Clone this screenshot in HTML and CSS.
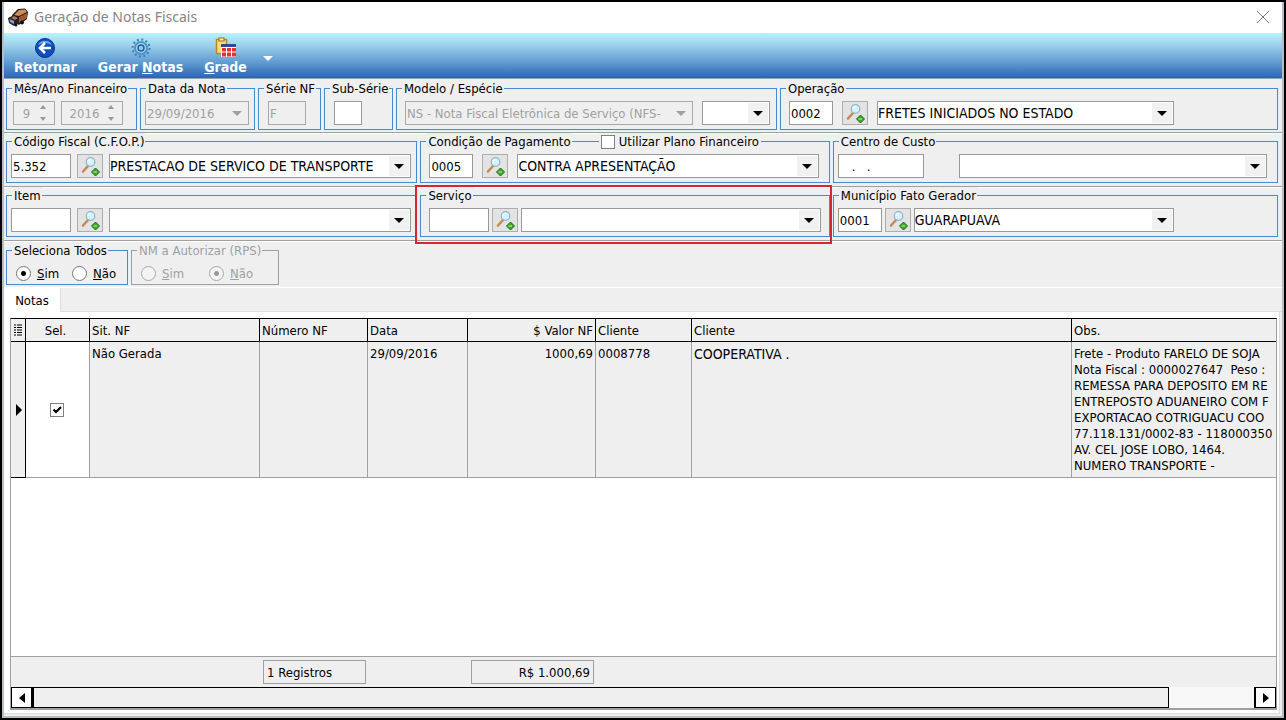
FILE: index.html
```html
<!DOCTYPE html>
<html lang="pt-BR">
<head>
<meta charset="utf-8">
<title>Geração de Notas Fiscais</title>
<link rel="stylesheet" href="styles.css">
</head>
<body>
<svg class="defs" aria-hidden="true">
  <symbol id="lookup" viewBox="0 0 20 20">
    <path d="M3 15.500 8 10" stroke="#c68a56" stroke-width="2.600" stroke-linecap="round"/>
    <circle cx="10.500" cy="6" r="4.300" fill="#d5f2fb" stroke="#8fb4cc" stroke-width="1.200"/>
    <path d="M8 5.500a3 3 0 0 1 3-2.200" stroke="#fff" stroke-width="1.200" fill="none"/>
    <path d="M15.500 12 19.500 16 15.500 20 11.500 16Z" fill="#3fa52f" stroke="#1d6a16"/>
    <path d="M13.500 16h3.500" stroke="#8be66a" stroke-width="1.500"/>
  </symbol>
  <symbol id="spin" viewBox="0 0 8 18">
    <path d="M1 5 4 1 7 5ZM1 13 4 17 7 13Z" fill="#999"/>
  </symbol>
</svg>
<div class="window">
  <header class="titlebar">
    <svg class="app-icon" viewBox="0 0 20 20" aria-hidden="true">
      <path d="M4 8 10 2 17 1.500 20 5 19 12 11 18 7 15Z" fill="#2c150d"/>
      <path d="M6 8 11 3 17 2.500 19 5 11 9Z" fill="#c98d5e"/>
      <path d="M11 10 19 6V11L11 16Z" fill="#9a5a36"/>
      <path d="M0 11 6 8 11 11V16L6 19 1 16Z" fill="#20222e"/>
      <path d="M1.500 12 6 14V17L2 15Z" fill="#7fa6cf"/>
      <path d="M6 9 10 11 7 13 3 11Z" fill="#b0754a"/>
      <circle cx="14" cy="15.500" r="2" fill="#111"/><circle cx="8" cy="18" r="1.500" fill="#111"/>
    </svg>
    <h1>Geração de Notas Fiscais</h1>
    <button class="close" aria-label="Fechar"><svg viewBox="0 0 12 12"><path d="M0 0 12 12M12 0 0 12" stroke="#777"/></svg></button>
  </header>

  <nav class="toolbar">
    <button class="tool">
      <svg viewBox="0 0 22 22"><circle cx="11" cy="11" r="9.500" fill="#0d4fc0" stroke="#083082"/><path d="M4 8a8 8 0 0 1 14 0Q11 4 4 8Z" fill="#6ca7f2"/><path d="M17 11H6M11 6 6 11l5 5" stroke="#fff" stroke-width="2.600" fill="none"/></svg>
      <span>Retornar</span>
    </button>
    <button class="tool">
      <svg viewBox="0 0 22 22"><circle cx="11" cy="11" r="8.500" fill="none" stroke="#3c7fb5" stroke-width="2" stroke-dasharray="2 2.450"/><circle cx="11" cy="11" r="6" fill="#a8dcf8" stroke="#4b93c9" stroke-width="2"/><circle cx="11" cy="11" r="3" fill="#8ccbee" stroke="#21598f" stroke-width="1.400"/></svg>
      <span>Gerar <u>N</u>otas</span>
    </button>
    <button class="tool">
      <svg viewBox="0 0 22 22"><rect x="1.500" y="2.500" width="10" height="14" fill="#f6dc7a" stroke="#b98716" stroke-width="1.400"/><rect x="4" y="1" width="5" height="3" fill="#fbefb0" stroke="#a66b10"/><path d="M6 7h15v13H6z" fill="#fff"/><path d="M6 7h15v3H6z" fill="#2a4d9b"/><path d="M7 11h4v3.500H7zM12 11h4v3.500h-4zM17 11h4v3.500h-4zM7 15.500h4v4H7zM12 15.500h4v4h-4zM17 15.500h4v4h-4z" fill="#e2342c"/></svg>
      <span><u>G</u>rade</span>
    </button>
    <button class="more" aria-label="Mais opções"><svg viewBox="0 0 10 5"><path d="M0 0H10L5 5Z" fill="#fff"/></svg></button>
  </nav>

  <form class="filters">
    <div class="row">
      <fieldset class="group w-month">
        <legend>Mês/Ano Financeiro</legend>
        <div class="fields gap-s">
          <span class="spin f42"><input aria-label="Mês" value="9" disabled><svg><use href="#spin"/></svg></span>
          <span class="spin f62"><input aria-label="Ano" value="2016" disabled><svg><use href="#spin"/></svg></span>
        </div>
      </fieldset>
      <fieldset class="group w-date">
        <legend>Data da Nota</legend>
        <div class="fields flush"><select class="grow" aria-label="Data da Nota" disabled><option>29/09/2016</option></select></div>
      </fieldset>
      <fieldset class="group w-serie">
        <legend>Série NF</legend>
        <div class="fields inset"><input class="f38" aria-label="Série NF" value="F" disabled></div>
      </fieldset>
      <fieldset class="group w-sub">
        <legend>Sub-Série</legend>
        <div class="fields inset"><input class="f28" aria-label="Sub-Série"></div>
      </fieldset>
      <fieldset class="group g-model">
        <legend>Modelo / Espécie</legend>
        <div class="fields gap-m">
          <select class="grow" aria-label="Modelo" disabled><option>NS - Nota Fiscal Eletrônica de Serviço (NFS-</option></select>
          <select class="f68" aria-label="Espécie"><option></option></select>
        </div>
      </fieldset>
      <fieldset class="group g-oper">
        <legend>Operação</legend>
        <div class="fields gap-m wide-end">
          <input class="f44" aria-label="Código da operação" value="0002">
          <button type="button" class="lookup" aria-label="Pesquisar operação"><svg><use href="#lookup"/></svg></button>
          <select class="grow caps" aria-label="Operação"><option>FRETES INICIADOS NO ESTADO</option></select>
        </div>
      </fieldset>
    </div>

    <div class="row">
      <fieldset class="group g-third">
        <legend>Código Fiscal (C.F.O.P.)</legend>
        <div class="fields gap-s flush">
          <input class="f60" aria-label="Código fiscal" value="5.352">
          <button type="button" class="lookup" aria-label="Pesquisar código fiscal"><svg><use href="#lookup"/></svg></button>
          <select class="grow caps" aria-label="Código Fiscal"><option>PRESTACAO DE SERVICO DE TRANSPORTE</option></select>
        </div>
      </fieldset>
      <div class="holder g-third">
        <fieldset class="group">
          <legend>Condição de Pagamento</legend>
          <div class="fields gap-m mid-end">
            <input class="f44" aria-label="Código da condição" value="0005">
            <button type="button" class="lookup" aria-label="Pesquisar condição"><svg><use href="#lookup"/></svg></button>
            <select class="grow caps" aria-label="Condição de Pagamento"><option>CONTRA APRESENTAÇÃO</option></select>
          </div>
        </fieldset>
        <label class="on-border"><input type="checkbox">Utilizar Plano Financeiro</label>
      </div>
      <fieldset class="group g-last">
        <legend>Centro de Custo</legend>
        <div class="fields gap-l flush mid-end">
          <input class="f86 mask" aria-label="Código do centro de custo" value=".   .">
          <select class="grow" aria-label="Centro de Custo"><option></option></select>
        </div>
      </fieldset>
    </div>

    <div class="row">
      <fieldset class="group g-third">
        <legend>Item</legend>
        <div class="fields gap-s flush">
          <input class="f60" aria-label="Código do item">
          <button type="button" class="lookup" aria-label="Pesquisar item"><svg><use href="#lookup"/></svg></button>
          <select class="grow" aria-label="Item"><option></option></select>
        </div>
      </fieldset>
      <div class="holder marked g-third">
        <fieldset class="group">
          <legend>Serviço</legend>
          <div class="fields gap-xs">
            <input class="f60" aria-label="Código do serviço">
            <button type="button" class="lookup" aria-label="Pesquisar serviço"><svg><use href="#lookup"/></svg></button>
            <select class="grow" aria-label="Serviço"><option></option></select>
          </div>
        </fieldset>
      </div>
      <fieldset class="group g-last">
        <legend>Município Fato Gerador</legend>
        <div class="fields gap-xs flush wide-end">
          <input class="f44" aria-label="Código do município" value="0001">
          <button type="button" class="lookup" aria-label="Pesquisar município"><svg><use href="#lookup"/></svg></button>
          <select class="grow caps" aria-label="Município Fato Gerador"><option>GUARAPUAVA</option></select>
        </div>
      </fieldset>
    </div>

    <div class="row radios">
      <fieldset class="group w-todos">
        <legend>Seleciona Todos</legend>
        <div class="choices">
          <label><input type="radio" name="todos" checked><u>S</u>im</label>
          <label><input type="radio" name="todos"><u>N</u>ão</label>
        </div>
      </fieldset>
      <fieldset class="group off w-rps" disabled>
        <legend>NM a Autorizar (RPS)</legend>
        <div class="choices apart">
          <label><input type="radio" name="rps"><u>S</u>im</label>
          <label><input type="radio" name="rps" checked><u>N</u>ão</label>
        </div>
      </fieldset>
    </div>
  </form>

  <div class="tabs"><button class="tab">Notas</button></div>

  <main class="page">
    <div class="grid">
      <div class="grid-body">
        <table>
          <colgroup><col class="c-ind"><col class="c-sel"><col class="c-sit"><col class="c-num"><col class="c-data"><col class="c-valor"><col class="c-cod"><col class="c-cli"><col></colgroup>
          <thead>
            <tr>
              <th><svg class="menu" viewBox="0 0 8 12" aria-hidden="true"><path d="M0 1h2M3 1h5M0 3.500h2M3 3.500h5M0 6h2M3 6h5M0 8.500h2M3 8.500h5M0 11h2M3 11h5" stroke="#000"/></svg></th>
              <th class="sel-head">Sel.</th><th>Sit. NF</th><th>Número NF</th><th>Data</th><th class="right">$ Valor NF</th><th>Cliente</th><th>Cliente</th><th>Obs.</th>
            </tr>
          </thead>
          <tbody>
            <tr>
              <td class="ind"><svg class="pointer" viewBox="0 0 6 12" aria-hidden="true"><path d="M0 0 6 6 0 12Z"/></svg></td>
              <td class="sel"><input type="checkbox" aria-label="Selecionar nota" checked></td>
              <td>Não Gerada</td><td></td><td>29/09/2016</td><td class="right">1000,69</td><td>0008778</td><td class="caps">COOPERATIVA .</td>
              <td class="obs">Frete - Produto FARELO DE SOJA
Nota Fiscal : 0000027647  Peso :
REMESSA PARA DEPOSITO EM RE
ENTREPOSTO ADUANEIRO COM F
EXPORTACAO COTRIGUACU COO
77.118.131/0002-83 - 118000350
AV. CEL JOSE LOBO, 1464.
NUMERO TRANSPORTE -</td>
            </tr>
          </tbody>
        </table>
      </div>
      <div class="totals">
        <output class="count">1 Registros</output>
        <output class="sum">R$ 1.000,69</output>
      </div>
      <div class="scroll">
        <button aria-label="Rolar para a esquerda"><svg viewBox="0 0 6 10"><path d="M6 0V10L0 5Z"/></svg></button>
        <div class="track"><div class="thumb"></div></div>
        <button aria-label="Rolar para a direita"><svg viewBox="0 0 6 10"><path d="M0 0V10L6 5Z"/></svg></button>
      </div>
    </div>
  </main>
</div>
</body>
</html>
```
FILE: styles.css
```css
* { box-sizing: border-box; }

body {
  margin: 0;
  background: #000;
  color: #000;
  font: 13px/17px "DejaVu Sans Condensed", "DejaVu Sans", sans-serif;
}

button, input, select { margin: 0; font: inherit; color: inherit; border-radius: 0; }
button { padding: 0; border: 0; background: none; }
svg { display: block; fill: none; }
.defs { position: absolute; width: 0; height: 0; }
.caps { font-size: 14px; }

.window {
  display: flex;
  flex-direction: column;
  min-height: calc(100vh - 4px);
  margin: 2px;
  border: 2px solid #b9bcc2;
  border-top: 0;
  background: #efefef;
}

/* Title bar */
.titlebar { display: flex; align-items: center; height: 31px; padding: 0 13px 2px 4px; background: #fff; }
.app-icon { width: 20px; height: 20px; }
.titlebar h1 {
  flex: 1;
  margin: 0 0 0 6px;
  color: #858585;
  font: 14px/20px "Noto Sans", "Open Sans", sans-serif;
}
.close svg { width: 12px; height: 12px; }

/* Toolbar */
.toolbar {
  display: flex;
  gap: 21px;
  height: 46px;
  padding: 4px 10px 0;
  border-bottom: 1px solid #94a3b5;
  background: linear-gradient(#b6f3fc, #a0d4ee 25%, #5c97d0 68%, #2c65b0);
}
.tool { display: flex; flex-direction: column; align-items: center; color: #fff; font-weight: bold; font-size: 14px; }
.tool svg { width: 22px; height: 22px; }
.tool span { line-height: 16px; }
.more { align-self: flex-start; margin: 19px 0 0 -5px; }
.more svg { width: 10px; height: 5px; }

/* Filter rows */
.row { display: flex; gap: 3px; height: 54px; padding: 0 4px 0 2px; border-bottom: 1px solid #a0a0a0; box-shadow: 0 1px #fff; }
.row:first-child { padding-top: 1px; }
.row.radios { height: 46px; padding-top: 1px; border: 0; box-shadow: none; }
.group {
  flex: none;
  min-width: 0;
  height: 50px;
  margin: 0;
  padding: 0;
  border: 1px solid #4a88cf;
  box-shadow: 0 0 0 1px #dcf4fe;
}
.group legend { margin-left: 5px; padding: 0 1px 0 2px; background: #efefef; white-space: nowrap; }
.radios .group { height: 43px; }
.group.off { border-color: #a0a0a0; box-shadow: none; color: #a0a0a0; }
.holder { position: relative; }
.holder .group { width: 100%; }

.w-month { width: 131px; }
.w-date { width: 115px; }
.w-serie { width: 63px; }
.w-sub { width: 69px; }
.w-todos { width: 122px; }
.w-rps { width: 148px; }
.g-model { flex: 382 1 0; }
.g-oper { flex: 500 1 0; }
.g-third { flex: 412 1 0; }
.g-last { flex: 446 1 0; }

.fields { display: flex; padding: 4px 8px 0 8px; }
.w-month .fields { padding-left: 6px; }
.g-model .fields { padding-right: 6px; }
.fields.flush { padding-left: 4px; padding-right: 5px; }
.fields.inset { padding-left: 9px; }
.fields.mid-end { padding-right: 10px; }
.fields.wide-end { padding-right: 103px; }
.gap-xs { gap: 3px; }
.gap-s { gap: 6px; }
.gap-m { gap: 9px; }
.gap-l { gap: 35px; }

.fields input, .fields select {
  height: 24px;
  padding: 0 1px;
  border: 1px solid #9c9894;
  outline: 0;
  background-color: #fff;
}
.fields select {
  appearance: none;
  min-width: 0;
  padding-left: 1px;
  padding-right: 22px;
  background-image: url("data:image/svg+xml,%3Csvg xmlns='http://www.w3.org/2000/svg' width='20' height='20'%3E%3Crect width='20' height='20' fill='%23f1f1f1'/%3E%3Cpath d='M5 8h10l-5 5z'/%3E%3C/svg%3E");
  background-position: right 1px center;
  background-repeat: no-repeat;
}
.fields select.caps { padding-left: 0; }
.fields input:disabled, .fields select:disabled {
  border-color: #a8a8a8;
  background-color: #efefef;
  color: #a0a0a0;
  opacity: 1;
}
.fields select:disabled {
  background-image: url("data:image/svg+xml,%3Csvg xmlns='http://www.w3.org/2000/svg' width='20' height='20'%3E%3Cpath d='M5 8h10l-5 5z' fill='%23a0a0a0'/%3E%3C/svg%3E");
}
.grow { flex: 1; }
.f28 { width: 28px; }
.f38 { width: 38px; }
.f42 { width: 42px; }
.f44 { width: 44px; flex: none; }
.f60 { width: 60px; flex: none; }
.f62 { width: 62px; }
.f68 { width: 68px; flex: none; }
.f86 { width: 86px; flex: none; }
.fields .mask { padding-left: 13px; white-space: pre; }

.spin { display: flex; align-items: center; border: 1px solid #a8a8a8; height: 24px; padding-right: 7px; }
.fields .spin input { flex: 1; width: 0; min-width: 0; height: 22px; border: 0; text-align: center; }
.spin svg { width: 8px; height: 18px; }

.lookup { display: grid; place-items: center; flex: none; width: 26px; height: 24px; border: 1px solid #adadad; background: #e3e3e3; }
.lookup svg { width: 20px; height: 20px; }

.on-border {
  position: absolute;
  top: 0;
  right: 69px;
  display: flex;
  align-items: center;
  gap: 4px;
  padding: 0 2px;
  background: #efefef;
  white-space: nowrap;
}

input[type="checkbox"] { appearance: none; width: 14px; height: 14px; border: 1px solid #808080; background: #fff center no-repeat; }
input[type="checkbox"]:checked {
  background-image: url("data:image/svg+xml,%3Csvg xmlns='http://www.w3.org/2000/svg' width='10' height='10'%3E%3Cpath d='M1.500 4.500 4 7l5-5' fill='none' stroke='%23000' stroke-width='2.200'/%3E%3C/svg%3E");
}

/* Red frame around the highlighted group */
.marked::after {
  content: "";
  position: absolute;
  inset: -2px -2px -4px -5px;
  border: 2px solid #d8262f;
  pointer-events: none;
}

.choices { display: flex; gap: 13px; padding: 6px 0 0 9px; }
.choices.apart { gap: 25px; }
.choices label { display: flex; align-items: center; }
input[type="radio"] { appearance: none; width: 15px; height: 15px; margin-right: 6px; border: 1px solid #777; border-radius: 50%; background: #fff; }
input[type="radio"]:checked { background: radial-gradient(circle, #000 2px, #fff 3px); }
input[type="radio"]:disabled { border-color: #a8a8a8; background: #f4f4f4; }
input[type="radio"]:disabled:checked { background: radial-gradient(circle, #999 2px, #f4f4f4 3px); }

/* Tabs and grid */
.tabs { height: 25px; border-top: 1px solid #fff; border-bottom: 1px solid #dcdcdc; }
.tab { width: 57px; height: 24px; border-right: 1px solid #dcdcdc; background: #fff; }
.page { display: flex; flex: 1; margin: 0 2px 2px 0; padding: 6px 2px 3px 6px; border-right: 1px solid #dcdcdc; border-bottom: 1px solid #dcdcdc; background: #fff; }
.grid { display: flex; flex: 1; flex-direction: column; min-width: 0; border: 1px solid #a0a0a0; border-top-color: #000; border-bottom-width: 2px; }
.grid-body { flex: 1; overflow: hidden; }

table { width: 100%; table-layout: fixed; border-collapse: separate; border-spacing: 0; }
th, td { overflow: hidden; padding: 0 2px; border-right: 1px solid #a0a0a0; border-bottom: 1px solid #a0a0a0; background: #efefef; text-align: left; white-space: nowrap; }
th { height: 23px; border-color: #000; font-weight: normal; }
td { height: 136px; padding-top: 4px; line-height: 16px; vertical-align: top; }
th:last-child, td:last-child { border-right: 0; padding-right: 0; }
.c-ind { width: 15px; }
.c-sel { width: 64px; }
.c-sit { width: 170px; }
.c-num { width: 108px; }
.c-data { width: 100px; }
.c-valor { width: 128px; }
.c-cod { width: 96px; }
.c-cli { width: 380px; }
.right { text-align: right; }
.sel-head { padding-right: 6px; text-align: center; }
td.ind, td.sel { padding: 0; vertical-align: middle; }
td.ind { border-color: #000; }
td.sel { padding-right: 2px; background: #fff; }
td.sel input { display: block; margin: 0 auto; }
.menu { width: 8px; height: 12px; margin-left: 1px; }
.pointer { width: 6px; height: 12px; margin-left: 5px; fill: #000; }
.obs { white-space: pre; }

.totals { display: flex; gap: 105px; height: 31px; padding: 3px 0 0 252px; border-top: 1px solid #a0a0a0; background: #efefef; }
.totals output { height: 24px; padding: 0 3px; border: 1px solid #a0a0a0; line-height: 23px; }
.count { width: 103px; }
.sum { width: 123px; text-align: right; }

.scroll { display: flex; height: 21px; }
.scroll button { display: grid; place-items: center; width: 22px; border: 1px solid #000; background: #fff; }
.scroll button:first-child { border-right-width: 2px; }
.scroll button:last-child { border-left-width: 2px; }
.scroll svg { width: 6px; height: 10px; fill: #000; }
.track { flex: 1; background: #f8f8f8; }
.thumb { width: 93%; height: 100%; border: 1px solid #000; background: #efefef; }
```
